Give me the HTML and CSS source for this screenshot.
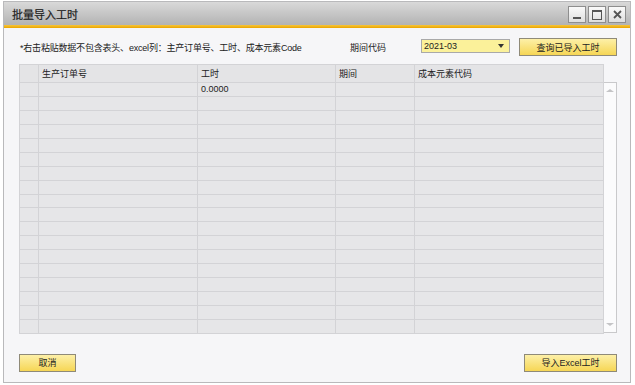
FILE: index.html
```html
<!DOCTYPE html>
<html lang="zh-CN">
<head>
    <meta charset="UTF-8">
    <title>批量导入工时</title>
    <link rel="stylesheet" href="styles.css">
</head>
<body>

    <div class="window">
        <!-- Title bar -->
        <div class="title-bar">
            <span class="title">批量导入工时</span>
            <div class="controls">
                <span class="ctl ctl-min"></span>
                <span class="ctl ctl-max"></span>
                <span class="ctl ctl-close">
                    <svg width="9" height="9" viewBox="0 0 9 9"><path d="M1 1L8 8M8 1L1 8" stroke="#555" stroke-width="1.8"/></svg>
                </span>
            </div>
        </div>
        <div class="accent"></div>

        <div class="content">
            <!-- Top row -->
            <div class="top-row">
                <span class="note">*右击粘贴数据不包含表头、excel列：主产订单号、工时、成本元素Code</span>
                <span class="label">期间代码</span>
                <div class="combo">
                    <span>2021-03</span>
                    <span class="arrow"></span>
                </div>
                <button class="btn btn-query">查询已导入工时</button>
            </div>

            <!-- Grid -->
            <div class="grid-area">
                <table class="grid" id="grid">
                    <thead>
                        <tr>
                            <th class="rownum"></th>
                            <th class="c1">生产订单号</th>
                            <th class="c2">工时</th>
                            <th class="c3">期间</th>
                            <th class="c4">成本元素代码</th>
                        </tr>
                    </thead>
                    <tbody></tbody>
                </table>
                <div class="scrollbar">
                    <span class="up"></span>
                    <span class="down"></span>
                </div>
            </div>

            <!-- Bottom buttons -->
            <div class="bottom-row">
                <button class="btn btn-cancel">取消</button>
                <button class="btn btn-import">导入Excel工时</button>
            </div>
        </div>
    </div>

    <script>
        // fill the empty rows of the grid
        var body = document.querySelector('#grid tbody');
        for (var i = 0; i < 18; i++) {
            var tr = document.createElement('tr');
            var hours = i === 0 ? '0.0000' : '';
            tr.innerHTML = '<td class="rownum"></td><td></td><td>' + hours + '</td><td></td><td></td>';
            body.appendChild(tr);
        }
    </script>

</body>
</html>
```

FILE: styles.css
```css
body {
    margin: 0;
    padding: 0;
    background-color: #ffffff;
    font-family: "Liberation Sans", "Noto Sans CJK SC", sans-serif;
    font-size: 9px;
    color: #222;
}

/* Window frame */
.window {
    margin: 1px 0 0 3px;
    width: 626px;
    height: 380px;
    border: 1px solid #b9b9bb;
    background-color: #f6f6f8;
    display: flex;
    flex-direction: column;
}

.title-bar {
    height: 23px;
    background: linear-gradient(to bottom, #d9d9d9, #b3b3b3);
    display: flex;
    align-items: center;
    justify-content: space-between;
    padding: 0 4px 0 8px;
}

.title {
    font-size: 11px;
    color: #1a1a1a;
    -webkit-text-stroke: 0.2px #1a1a1a;
}

.controls {
    display: flex;
    gap: 2px;
    margin-top: 2px;
}

.ctl {
    width: 16px;
    height: 15px;
    border: 1px solid #8e8e8e;
    background: linear-gradient(to bottom, #fafafa, #dedede);
    position: relative;
    display: flex;
    align-items: center;
    justify-content: center;
}

.ctl-min::after {
    content: "";
    position: absolute;
    left: 4px;
    bottom: 3px;
    width: 8px;
    height: 2px;
    background-color: #555;
}

.ctl-max::after {
    content: "";
    width: 8px;
    height: 7px;
    border: 1px solid #555;
    border-top-width: 2px;
}

.accent {
    height: 3px;
    background: linear-gradient(to bottom, #f7c63a, #eaa400);
}

.content {
    flex: 1;
    padding: 10px 13px 0 15px;
    display: flex;
    flex-direction: column;
}

/* Top row */
.top-row {
    height: 18px;
    display: flex;
    align-items: center;
}

.note {
    flex: 1;
    padding-left: 1px;
    letter-spacing: -0.2px;
}

.label {
    width: 71px;
}

.combo {
    width: 85px;
    height: 12px;
    border: 1px solid #a9a9a9;
    background-color: #fbf19a;
    display: flex;
    align-items: center;
    justify-content: space-between;
    padding: 0 0 0 2px;
    box-sizing: content-box;
    margin-right: 9px;
    margin-top: -2px;
}

.arrow {
    width: 0;
    height: 0;
    border-left: 3px solid transparent;
    border-right: 3px solid transparent;
    border-top: 4px solid #333;
    margin-right: 5px;
}

.btn {
    height: 18px;
    border: 1px solid #8f8a78;
    background: linear-gradient(to bottom, #fdf0a8, #f6d655);
    font-family: "Liberation Sans", "Noto Sans CJK SC", sans-serif;
    font-size: 9px;
    color: #222;
    padding: 0;
    cursor: pointer;
}

.btn-query {
    width: 98px;
}

/* Grid */
.grid-area {
    margin-top: 8px;
    display: flex;
    align-items: flex-start;
}

.grid {
    border-collapse: collapse;
    table-layout: fixed;
    width: 585px;
    background-color: #e6e6e8;
}

.grid th,
.grid td {
    border: 1px solid #d3d3d6;
    padding: 0;
    text-indent: 3px;
    text-align: left;
    font-weight: normal;
    white-space: nowrap;
    overflow: hidden;
}

.grid th {
    height: 17px;
    background-color: #e4e4e6;
}

.grid td {
    height: 12.95px;
    line-height: 12px;
}

.grid .rownum {
    width: 18px;
}

.grid .c1 { width: 158px; }
.grid .c2 { width: 137px; }
.grid .c3 { width: 78px; }

.scrollbar {
    margin-top: 18px;
    width: 13px;
    height: 251px;
    border: 1px solid #c9c9cb;
    border-left: none;
    background-color: #fbfbfc;
    display: flex;
    flex-direction: column;
    justify-content: space-between;
    align-items: center;
    padding: 6px 0;
    box-sizing: border-box;
}

.up {
    border-left: 4px solid transparent;
    border-right: 4px solid transparent;
    border-bottom: 3px solid #c4c4c6;
}

.down {
    border-left: 4px solid transparent;
    border-right: 4px solid transparent;
    border-top: 3px solid #c4c4c6;
}

/* Bottom buttons */
.bottom-row {
    margin-top: 20px;
    display: flex;
    justify-content: space-between;
}

.btn-cancel {
    width: 57px;
}

.btn-import {
    width: 93px;
}
```
